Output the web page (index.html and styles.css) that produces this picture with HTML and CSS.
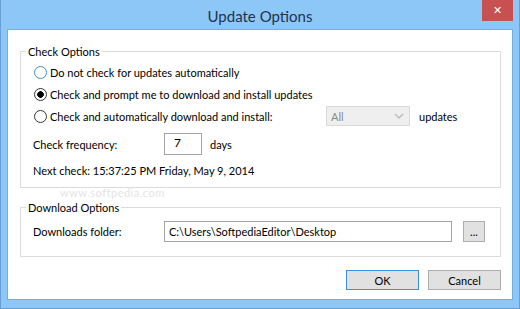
FILE: index.html
```html
<!DOCTYPE html>
<html>

<head>
    <title>Update Options</title>
    <meta name="viewport" content="width=device-width, initial-scale=1.0">
    <link rel="stylesheet" href="styles.css">
</head>

<body>
    <div class="window">
        <div class="titlebar">
            <span class="title">Update Options</span>
            <button class="close">&#x2715;</button>
        </div>
        <div class="client">
            <fieldset class="group check-group">
                <legend>Check Options</legend>
                <div class="row radio-row">
                    <span class="radio hover"></span>
                    <label>Do not check for updates automatically</label>
                </div>
                <div class="row radio-row">
                    <span class="radio checked"></span>
                    <label>Check and prompt me to download and install updates</label>
                </div>
                <div class="row radio-row">
                    <span class="radio"></span>
                    <label class="auto-label">Check and automatically download and install:</label>
                    <div class="select">
                        <span>All</span>
                        <svg width="10" height="6" viewBox="0 0 10 6"><path d="M1 1 L5 5 L9 1" fill="none" stroke="#b4b4b4" stroke-width="1.2"/></svg>
                    </div>
                    <span class="after">updates</span>
                </div>
                <div class="row freq-row">
                    <label class="field-label">Check frequency:</label>
                    <div class="textbox small">7</div>
                    <span class="after">days</span>
                </div>
                <div class="row next-row">Next check: 15:37:25 PM Friday, May 9, 2014</div>
            </fieldset>

            <div class="watermark">www.softpedia.com</div>

            <fieldset class="group download-group">
                <legend>Download Options</legend>
                <div class="row folder-row">
                    <label class="field-label">Downloads folder:</label>
                    <div class="textbox wide">C:\Users\SoftpediaEditor\Desktop</div>
                    <button class="btn browse">...</button>
                </div>
            </fieldset>

            <div class="buttons">
                <button class="btn ok">OK</button>
                <button class="btn cancel">Cancel</button>
            </div>
        </div>
    </div>
</body>

</html>
```

FILE: styles.css
```css
body {
    margin: 0;
    font-family: Lato, 'Noto Sans', sans-serif;
    font-size: 11px;
    color: #000;
    background-color: #8dc7f7;
}

.window {
    position: relative;
    width: 520px;
    height: 309px;
    box-sizing: border-box;
    border: 1px solid #6a9fd3;
    border-top: none;
    background-color: #8dc7f7;
    display: flex;
    flex-direction: column;
}

.titlebar {
    height: 29px;
    display: flex;
    justify-content: center;
    align-items: center;
}

.title {
    font-size: 15px;
    color: #1f3350;
    margin-top: 2px;
}

.close {
    position: absolute;
    top: 0;
    right: 6px;
    width: 31px;
    height: 21px;
    border: none;
    padding: 0;
    background-color: #c75050;
    color: #fff;
    font-size: 11px;
    font-weight: bold;
    font-family: 'DejaVu Sans', sans-serif;
}

.client {
    position: relative;
    flex: 1;
    margin: 0 6px 8px 6px;
    border: 1px solid #74aee0;
    background-color: #fff;
    padding: 0 11px 0 12px;
}

.group {
    margin: 0;
    border: 1px solid #dcdcdc;
    padding: 0 5px;
    min-width: 0;
}

.group legend {
    padding: 0 2px;
    line-height: 15px;
}

.check-group {
    margin-top: 14px;
    padding-top: 2px;
    padding-bottom: 9px;
}

.row {
    display: flex;
    align-items: center;
}

.radio-row {
    height: 22px;
    padding-left: 8px;
}

.radio {
    width: 11px;
    height: 11px;
    border: 1px solid #333;
    border-radius: 50%;
    margin-right: 3px;
    background-color: #fff;
}

.radio.hover {
    border-color: #3c8fdc;
}

.radio.checked {
    background: radial-gradient(circle, #000 0, #000 3px, #fff 3.6px);
}

.auto-label {
    width: 276px;
}

.select {
    height: 18px;
    border: 1px solid #d9d9d9;
    background-color: #efefef;
    color: #8a8a8a;
    display: flex;
    align-items: center;
    justify-content: space-between;
    padding: 0 5px 0 4px;
    width: 73px;
}

.after {
    margin-left: 9px;
}

.freq-row {
    height: 22px;
    margin-top: 6px;
    padding-left: 7px;
}

.field-label {
    width: 131px;
}

.textbox {
    box-sizing: border-box;
    border: 1px solid #a5a5a5;
    background-color: #fff;
    padding: 0 6px;
}

.textbox.small {
    width: 38px;
    height: 22px;
    padding-top: 1px;
    padding-left: 9px;
    font-size: 12px;
}

.freq-row .after {
    margin-left: 8px;
}

.next-row {
    height: 16px;
    margin-top: 7px;
    padding-left: 7px;
}

.watermark {
    position: absolute;
    left: 52px;
    top: 157px;
    color: #e4e4e4;
    font-size: 11px;
    line-height: 12px;
    letter-spacing: 0.5px;
}

.download-group {
    margin-top: 12px;
    padding-bottom: 14px;
}

.folder-row {
    height: 21px;
    margin-top: 6px;
    padding-left: 7px;
}

.textbox.wide {
    width: 288px;
    height: 21px;
    line-height: 19px;
    padding-left: 4px;
}

.btn {
    font-family: Lato, 'Noto Sans', sans-serif;
    font-size: 11px;
    background-color: #e1e1e1;
    border: 1px solid #adadad;
    padding: 0;
    color: #000;
}

.browse {
    width: 22px;
    height: 21px;
    margin-left: 11px;
    line-height: 14px;
}

.buttons {
    display: flex;
    justify-content: flex-end;
    gap: 9px;
    margin-top: 13px;
}

.buttons .btn {
    width: 73px;
    height: 20px;
}

.ok {
    border-color: #3c8fdc;
}
```
